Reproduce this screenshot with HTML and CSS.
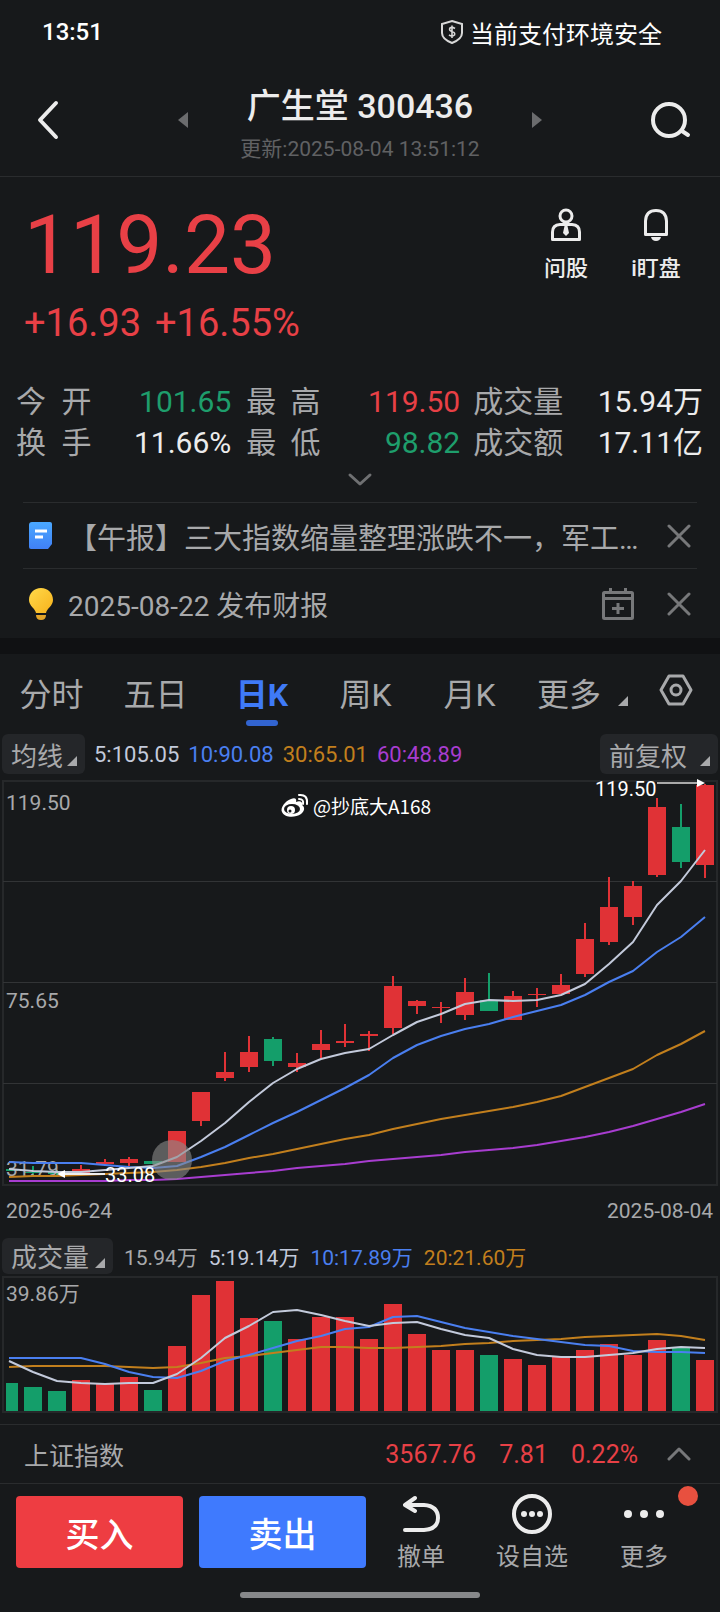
FILE: index.html
```html
<!DOCTYPE html>
<html lang="zh-CN">
<head>
<meta charset="utf-8">
<meta name="viewport" content="width=device-width, initial-scale=1">
<title>广生堂 300436</title>
<link rel="stylesheet" href="styles.css">
</head>
<body>

<div class="statusbar">
  <span class="clock">13:51</span>
  <span class="safe">
    <svg width="24" height="26" viewBox="0 0 24 26" fill="none" stroke="#d8d8d8" stroke-width="2">
      <path d="M12 2 L22 5 V14 Q22 20 12 24 Q2 20 2 14 V5 Z"/>
      <path d="M15 9.500 Q12 7.500 10 9 Q8.500 11.500 12 12.500 Q15.500 13.500 14.500 16 Q12 18 9 16 M12 6.500 V19" stroke-width="1.600"/>
    </svg>
    当前支付环境安全
  </span>
</div>

<header class="header">
  <button class="icon" aria-label="返回">
    <svg width="24" height="42" viewBox="0 0 24 42" fill="none" stroke="#ececec" stroke-width="4" stroke-linecap="round" stroke-linejoin="round"><path d="M20 4 L4 21 L20 38"/></svg>
  </button>
  <button class="icon" aria-label="上一只">
    <svg width="10" height="16" viewBox="0 0 10 16"><path d="M10 0 V16 L0 8 Z" fill="#6b6c6e"/></svg>
  </button>
  <div class="title">
    <h1>广生堂 300436</h1>
    <p>更新:2025-08-04 13:51:12</p>
  </div>
  <button class="icon" aria-label="下一只">
    <svg width="10" height="16" viewBox="0 0 10 16"><path d="M0 0 V16 L10 8 Z" fill="#6b6c6e"/></svg>
  </button>
  <button class="icon" aria-label="搜索">
    <svg width="42" height="38" viewBox="0 0 42 38" fill="none" stroke="#ececec" stroke-width="4" stroke-linecap="round"><circle cx="19" cy="19" r="16"/><path d="M32 30 L38 34"/></svg>
  </button>
</header>

<section class="quote">
  <div>
    <div class="price">119.23</div>
    <div class="change"><span>+16.93</span><span>+16.55%</span></div>
  </div>
  <div class="tools">
    <button>
      <svg width="32" height="34" viewBox="0 0 32 34" fill="none" stroke="#ececec" stroke-width="3"><circle cx="16" cy="8" r="6"/><path d="M10 16.500 H22 Q29.500 17 29.500 24 V31.500 H2.500 V24 Q2.500 17 10 16.500 Z" stroke-linejoin="round"/><path d="M14.500 18 H17.500 L19 25 L16 28 L13 25 Z" fill="#ececec" stroke="none"/></svg>
      问股
    </button>
    <button>
      <svg width="32" height="34" viewBox="0 0 32 34" fill="none" stroke="#ececec" stroke-width="3"><path d="M5.500 26.500 V13 Q6 2.500 16 2.500 Q26 2.500 26.500 13 V26.500 Z" stroke-linejoin="round"/><path d="M11 29 H21 Q20 33 16 33 Q12 33 11 29 Z" fill="#ececec" stroke="none"/></svg>
      i盯盘
    </button>
  </div>
</section>

<table class="stats">
  <tr>
    <th scope="row"><span><i>今</i><i>开</i></span></th><td class="green">101.65</td>
    <th scope="row"><span><i>最</i><i>高</i></span></th><td class="red">119.50</td>
    <th scope="row"><span>成交量</span></th><td>15.94万</td>
  </tr>
  <tr>
    <th scope="row"><span><i>换</i><i>手</i></span></th><td>11.66%</td>
    <th scope="row"><span><i>最</i><i>低</i></span></th><td class="green">98.82</td>
    <th scope="row"><span>成交额</span></th><td>17.11亿</td>
  </tr>
</table>
<button class="expand" aria-label="展开">
  <svg width="26" height="16" viewBox="0 0 26 16" fill="none" stroke="#6f7072" stroke-width="3" stroke-linecap="round" stroke-linejoin="round"><path d="M3 3 L13 12 L23 3"/></svg>
</button>

<ul class="notices">
  <li>
    <svg width="26" height="32" viewBox="0 0 26 32"><defs><linearGradient id="doc" x2="0" y2="1"><stop stop-color="#4aa8ff"/><stop offset="1" stop-color="#4080f5"/></linearGradient></defs><path d="M4 2 H22 Q24 2 24 4 V24 L20 29 H3 Q1 29 1 27 V5 Q1 2 4 2 Z" fill="url(#doc)"/><path d="M7 11 H19 M7 17 H15" stroke="#fff" stroke-width="3"/></svg>
    <a class="news" href="#">【午报】三大指数缩量整理涨跌不一，军工…</a>
    <button class="icon" aria-label="关闭"><svg width="24" height="24" viewBox="0 0 24 24" stroke="#77787a" stroke-width="3" stroke-linecap="round"><path d="M2 2 L22 22 M22 2 L2 22"/></svg></button>
  </li>
  <li>
    <svg width="26" height="32" viewBox="0 0 26 32"><defs><linearGradient id="bulb" x2="1" y2="1"><stop stop-color="#ffd94a"/><stop offset="1" stop-color="#f7b21c"/></linearGradient></defs><path d="M13 0 C20 0 25 5 25 12 C25 18 19 20 18 25 H8 C7 20 1 18 1 12 C1 5 6 0 13 0 Z" fill="url(#bulb)"/><path d="M8 27 H18 Q18 32 13 32 Q8 32 8 27 Z" fill="#e3a52a"/></svg>
    <a href="#">2025-08-22 发布财报</a>
    <button class="icon" aria-label="加入日历"><svg width="34" height="34" viewBox="0 0 34 34" fill="none" stroke="#77787a" stroke-width="3"><rect x="2.500" y="5.500" width="29" height="26" rx="1"/><path d="M3 11.500 H31 M9.500 1 V6 M24.500 1 V6 M17 16 V27 M11 21.500 H23"/></svg></button>
    <button class="icon" aria-label="关闭"><svg width="24" height="24" viewBox="0 0 24 24" stroke="#77787a" stroke-width="3" stroke-linecap="round"><path d="M2 2 L22 22 M22 2 L2 22"/></svg></button>
  </li>
</ul>

<nav class="tabs">
  <button>分时</button>
  <button>五日</button>
  <button class="on">日K</button>
  <button>周K</button>
  <button>月K</button>
  <button>更多</button>
  <div class="set">
    <svg width="10" height="10" viewBox="0 0 10 10"><path d="M10 0 V10 H0 Z" fill="#a8a9ab"/></svg>
    <button class="icon" aria-label="设置"><svg width="34" height="32" viewBox="0 0 34 32" fill="none" stroke="#a8a9ab" stroke-width="3" stroke-linejoin="round"><path d="M10 2 H24 L32 16 L24 30 H10 L2 16 Z"/><circle cx="17" cy="16" r="5"/></svg></button>
  </div>
</nav>

<div class="legend">
  <button class="pick">均线<svg width="10" height="10" viewBox="0 0 10 10"><path d="M10 0 V10 H0 Z" fill="#a8a9ab"/></svg></button>
  <span class="m5">5:105.05</span>
  <span class="m10">10:90.08</span>
  <span class="m30">30:65.01</span>
  <span class="m60">60:48.89</span>
  <button class="pick wide">前复权<svg width="10" height="10" viewBox="0 0 10 10"><path d="M10 0 V10 H0 Z" fill="#a8a9ab"/></svg></button>
</div>

<svg class="chart" id="kline" viewBox="0 780 720 406"></svg>

<div class="dates"><span>2025-06-24</span><span>2025-08-04</span></div>

<div class="legend vol">
  <button class="pick wide">成交量<svg width="10" height="10" viewBox="0 0 10 10"><path d="M10 0 V10 H0 Z" fill="#a8a9ab"/></svg></button>
  <span>15.94万</span>
  <span class="m5">5:19.14万</span>
  <span class="m10">10:17.89万</span>
  <span class="m30">20:21.60万</span>
</div>

<svg class="chart" id="volume" viewBox="0 1276 720 137"></svg>

<div class="index">
  <span class="name">上证指数</span>
  <span>3567.76</span><span>7.81</span><span>0.22%</span>
  <button class="icon" aria-label="展开指数"><svg width="24" height="16" viewBox="0 0 24 16" fill="none" stroke="#77787a" stroke-width="3" stroke-linecap="round" stroke-linejoin="round"><path d="M2 13 L12 3 L22 13"/></svg></button>
</div>

<footer class="actions">
  <button class="trade buy">买入</button>
  <button class="trade sell">卖出</button>
  <button class="act">
    <svg width="42" height="42" viewBox="0 0 42 42" fill="none" stroke="#ececec" stroke-width="4" stroke-linecap="round" stroke-linejoin="round"><path d="M15 5 L5 12 L15 18 M5 12 H24 Q38 13 38 25 Q38 36 24 37 H5"/></svg>
    撤单
  </button>
  <button class="act">
    <svg width="42" height="42" viewBox="0 0 42 42"><circle cx="21" cy="21" r="18" fill="none" stroke="#ececec" stroke-width="4"/><g fill="#ececec"><circle cx="13" cy="21" r="3"/><circle cx="21" cy="21" r="3"/><circle cx="29" cy="21" r="3"/></g></svg>
    设自选
  </button>
  <button class="act">
    <svg width="42" height="42" viewBox="0 0 42 42" fill="#ececec"><circle cx="5" cy="21" r="4"/><circle cx="21" cy="21" r="4"/><circle cx="37" cy="21" r="4"/></svg>
    更多
    <b class="dot"></b>
  </button>
</footer>
<div class="homebar"></div>

<script src="chart.js"></script>
</body>
</html>
```

FILE: styles.css
```css
* {
    box-sizing: border-box;
    }
body {
    margin: 0;
    background: #17191b;
    color: #a8a9ab;
    font-family: Roboto, "Noto Sans CJK SC", sans-serif;
    font-size: 22px;
    }
button {
    padding: 0;
    border: 0;
    background: none;
    color: inherit;
    font: inherit;
    }
a {
    color: inherit;
    text-decoration: none;
    }
svg {
    display: block;
    flex: none;
    }
.icon {
    flex: none;
    }

/* top */
.statusbar {
    display: flex;
    justify-content: space-between;
    align-items: center;
    height: 64px;
    padding: 0 58px 0 42px;
    color: #fff;
    font-size: 24px;
    }
.clock {
    font-weight: 500;
    }
.safe {
    display: flex;
    align-items: center;
    gap: 6px;
    }
.header {
    display: grid;
    grid-template-columns: 140px 30px 1fr 30px 140px;
    align-items: center;
    justify-items: center;
    height: 113px;
    padding: 0 28px;
    border-bottom: 1px solid #2a2c2e;
    }
.header .icon:first-child {
    justify-self: start;
    padding-left: 8px;
    }
.header .icon:last-child {
    justify-self: end;
    }
.title {
    padding-top: 9px;
    text-align: center;
    }
.title h1 {
    margin: 0;
    color: #ececec;
    font-size: 34px;
    line-height: 48px;
    font-weight: 500;
    }
.title p {
    margin: 0;
    color: #606163;
    font-size: 21px;
    line-height: 38px;
    }

/* price */
.quote {
    display: flex;
    justify-content: space-between;
    padding: 20px 37px 0 24px;
    color: #e84046;
    }
.price {
    font-size: 82px;
    line-height: 96px;
    }
.change {
    display: flex;
    gap: 14px;
    font-size: 38px;
    line-height: 60px;
    }
.tools {
    display: flex;
    gap: 36px;
    padding-top: 11px;
    }
.tools button {
    display: flex;
    flex-direction: column;
    align-items: center;
    align-self: flex-start;
    gap: 12px;
    min-width: 54px;
    color: #ececec;
    font-weight: 500;
    line-height: 30px;
    }
.stats {
    width: 100%;
    margin-top: 28px;
    padding: 0 17px 0 16px;
    border-spacing: 0;
    table-layout: fixed;
    font-size: 30px;
    line-height: 41px;
    }
.stats th {
    width: 11%;
    padding: 0;
    font-weight: 400;
    white-space: nowrap;
    }
.stats th:nth-child(3) {
    width: 13%;
    padding-left: 15px;
    }
.stats th:nth-child(5) {
    width: 15%;
    padding-left: 13px;
    }
.stats th span {
    display: flex;
    justify-content: space-between;
    }
.stats i {
    font-style: normal;
    }
.stats td {
    padding: 0;
    color: #ececec;
    text-align: right;
    white-space: nowrap;
    }
.stats .red {
    color: #e84046;
    }
.stats .green {
    color: #1e9e6c;
    }
.expand {
    display: block;
    margin: 0 auto;
    padding: 9px 10px 14px;
    }

/* news */
.notices {
    margin: 0;
    padding: 0 23px;
    border-bottom: 16px solid #101113;
    list-style: none;
    font-size: 28px;
    }
.notices li {
    display: flex;
    align-items: center;
    height: 66px;
    padding: 0 6px 0 5px;
    border-top: 1px solid #2a2c2e;
    }
.notices li:last-child {
    height: 70px;
    }
.notices a {
    flex: 1;
    min-width: 0;
    margin-left: 14px;
    white-space: nowrap;
    overflow: hidden;
    }
.notices .news {
    font-size: 29px;
    }
.notices .icon + .icon {
    margin-left: 32px;
    }

/* tabs */
.tabs {
    display: grid;
    grid-template-columns: 103fr 105fr 108fr 99fr 109fr 90fr 106fr;
    height: 76px;
    font-size: 32px;
    }
.tabs > button {
    position: relative;
    }
.tabs .on {
    color: #3f7af7;
    font-weight: 700;
    }
.tabs .on::after {
    content: "";
    position: absolute;
    left: 50%;
    bottom: 4px;
    width: 32px;
    height: 6px;
    margin-left: -16px;
    border-radius: 3px;
    background: #3264d0;
    }
.set {
    display: flex;
    align-items: center;
    justify-content: space-between;
    padding: 0 27px 4px 4px;
    }
.set > svg {
    margin-top: 22px;
    }

/* charts */
.legend {
    display: flex;
    align-items: center;
    gap: 9px;
    height: 50px;
    padding: 0 2px 2px;
    }
.pick {
    display: flex;
    align-items: center;
    justify-content: space-between;
    width: 83px;
    height: 40px;
    padding: 0 8px 0 9px;
    border-radius: 6px;
    background: #242629;
    font-size: 26px;
    }
.pick svg {
    margin-top: 14px;
    }
.legend .wide {
    width: 118px;
    margin-left: auto;
    }
.vol {
    gap: 11px;
    height: 39px;
    font-size: 21px;
    }
.vol .wide {
    width: 111px;
    height: 36px;
    margin-left: 0;
    }
.m5 {
    color: #c3cadb;
    }
.m10 {
    color: #4a7ff0;
    }
.m30 {
    color: #c27f1d;
    }
.m60 {
    color: #a83dd0;
    }
.chart {
    width: 100%;
    height: auto;
    overflow: visible;
    }
.chart text {
    fill: #a8a9ab;
    font-size: 21px;
    }
.chart .mark {
    fill: #fff;
    font-size: 20px;
    }
.chart .user {
    fill: #fff;
    font-family: "Noto Sans CJK SC", sans-serif;
    font-size: 19px;
    }
.chart .up {
    fill: #e03236;
    }
.chart .down {
    fill: #149e6a;
    }
.chart polyline {
    fill: none;
    stroke: currentColor;
    stroke-width: 2;
    stroke-linejoin: round;
    }
.frame {
    fill: none;
    stroke: #26282a;
    stroke-width: 2;
    }
.grid {
    stroke: #323436;
    }
.dates {
    display: flex;
    justify-content: space-between;
    padding: 0 7px 0 6px;
    font-size: 21px;
    line-height: 51px;
    }

/* bottom */
.index {
    display: flex;
    align-items: center;
    gap: 23px;
    height: 60px;
    margin-top: 11px;
    padding: 0 29px 0 24px;
    border: solid #2a2c2e;
    border-width: 1px 0;
    color: #e84046;
    font-size: 25px;
    }
.index .name {
    margin-right: auto;
    color: #a8a9ab;
    }
.index .icon {
    margin-left: 6px;
    }
.actions {
    display: flex;
    padding: 12px 36px 0 16px;
    }
.trade {
    flex: 1;
    height: 72px;
    margin-right: 16px;
    border-radius: 4px;
    color: #fff;
    font-size: 34px;
    font-weight: 500;
    }
.buy {
    background: #ee3d42;
    }
.sell {
    background: #3f7afe;
    }
.act {
    position: relative;
    display: flex;
    flex-direction: column;
    align-items: center;
    gap: 4px;
    width: 78px;
    margin-top: -3px;
    font-size: 24px;
    line-height: 36px;
    }
.act:nth-child(4) {
    width: 144px;
    }
.act:nth-child(5) {
    width: 80px;
    }
.dot {
    position: absolute;
    top: -7px;
    right: -14px;
    width: 20px;
    height: 20px;
    border-radius: 50%;
    background: #e8503f;
    }
.homebar {
    width: 240px;
    height: 6px;
    margin: 17px auto 14px;
    border-radius: 3px;
    background: #87888a;
    }
```

FILE: chart.js
```js
// one row per day: body top, body bottom, wick top, wick bottom, falling day
var days = [
  [1169,1171,1169,1171,1], [1172,1173,1166,1175,1], [1172,1174,1170,1175,1],
  [1169,1175,1165,1175,0], [1162,1164,1159,1164,0], [1159,1163,1157,1166,0],
  [1161,1164,1161,1164,1], [1131,1162,1131,1162,0], [1092,1121,1092,1126,0],
  [1072,1078,1052,1081,0], [1052,1067,1036,1072,0], [1039,1061,1037,1066,1],
  [1063,1067,1053,1072,0], [1044,1050,1030,1058,0], [1041,1043,1024,1047,0],
  [1034,1036,1031,1051,0], [986,1028,976,1034,0],   [1001,1006,1000,1014,0],
  [1007,1008,1002,1023,0], [992,1015,978,1020,0],   [1000,1011,973,1011,1],
  [996,1020,991,1020,0],   [994,995,988,1007,0],    [985,994,974,994,0],
  [939,974,923,977,0],     [907,942,877,945,0],     [886,917,881,925,0],
  [807,875,798,877,0],     [827,862,804,868,1],     [785,865,784,878,0]
];
var volumes = [1383,1387,1391,1380,1383,1377,1390,1346,1295,1281,1318,1321,1339,1317,1317,
  1339,1304,1334,1350,1350,1355,1359,1365,1357,1350,1344,1355,1340,1347,1360];

var ma5 = [1169,1171,1172,1172,1170,1168,1166,1157,1141,1123,1102,1083,1069,1059,1053,
  1049,1035,1022,1014,1004,1000,1001,1000,995,984,964,942,905,881,850];
var ma10 = [1162,1163,1163,1163,1165,1167,1168,1166,1157,1147,1135,1123,1112,1100,1088,
  1075,1058,1045,1036,1029,1024,1017,1011,1005,995,982,971,952,937,917];
var ma30 = [1177,1176,1176,1175,1174,1173,1172,1170,1167,1163,1158,1154,1149,1144,1139,
  1135,1129,1124,1119,1115,1111,1107,1102,1096,1087,1078,1069,1055,1044,1031];
var ma60 = [1181,1181,1181,1181,1181,1180,1180,1179,1177,1175,1173,1171,1168,1166,1164,
  1161,1159,1157,1155,1152,1150,1148,1145,1141,1137,1132,1126,1119,1112,1104];
var v5 = [1361,1372,1381,1383,1384,1383,1383,1374,1358,1338,1326,1312,1310,1315,1321,
  1326,1323,1322,1329,1335,1338,1349,1355,1357,1357,1355,1353,1349,1347,1348];
var v10 = [1358,1358,1358,1358,1364,1372,1377,1378,1371,1361,1355,1348,1341,1336,1329,
  1327,1317,1316,1322,1328,1332,1336,1339,1342,1345,1346,1351,1352,1352,1353];
var v20 = [1367,1366,1366,1366,1366,1367,1368,1367,1363,1358,1356,1353,1350,1347,1347,
  1348,1348,1347,1346,1344,1343,1341,1340,1339,1337,1336,1335,1334,1336,1340];

function rect(x, y, w, h, cls) {
  return '<rect x="' + x + '" y="' + y + '" width="' + w + '" height="' + h + '" class="' + cls + '"/>';
}
function line(values, cls) {
  var pts = values.map(function (y, i) { return (9 + 24 * i) + ',' + y; });
  return '<polyline class="' + cls + '" points="' + pts.join(' ') + '"/>';
}
function grid(y) {
  return '<path class="grid" d="M3 ' + y + ' H717"/>';
}
function text(x, y, cls, s) {
  return '<text x="' + x + '" y="' + y + '" class="' + cls + '">' + s + '</text>';
}

var k = rect(3, 781, 714, 404, 'frame') + grid(881.5) + grid(982.5) + grid(1083.5);
var v = rect(3, 1277, 714, 135, 'frame');
days.forEach(function (d, i) {
  var cls = d[4] ? 'down' : 'up';
  var x = i ? 24 * i : 6;
  var w = i ? 18 : 12;
  k += rect(24 * i + 8, d[2], 2, d[3] - d[2], cls) + rect(x, d[0], w, d[1] - d[0], cls);
  v += rect(x, volumes[i], w, 1411 - volumes[i], cls);
});

k += text(6, 810, '', '119.50') + text(6, 1008, '', '75.65') + text(6, 1176, '', '31.79');
k += line(ma60, 'm60') + line(ma30, 'm30') + line(ma10, 'm10') + line(ma5, 'm5');
// touch point
k += '<circle cx="172" cy="1160" r="20" fill="#8a8a8a" fill-opacity=".6"/>';
// high and low marks
k += '<path d="M657 783 H698" stroke="#aaa" stroke-width="2"/><path d="M697 779 L705 783 L697 787 Z" fill="#fff"/>';
k += '<path d="M64 1174 H105" stroke="#eee" stroke-width="2"/><path d="M65 1170 L57 1174 L65 1178 Z" fill="#fff"/>';
k += text(595, 796, 'mark', '119.50') + text(105, 1182, 'mark', '33.08');
// weibo watermark
k += '<g fill="#fff"><path d="M291 799 C295 797 297 799 296 802 C300 800 303 802 302 805 C305 807 305 811 301 814 C295 818 285 818 282 812 C280 808 285 801 291 799 Z"/>' +
  '<ellipse cx="292" cy="809" rx="8" ry="5" fill="#17191b"/><circle cx="291" cy="810" r="4"/><circle cx="290" cy="811" r="1.500" fill="#17191b"/></g>' +
  '<path d="M299 795 Q308 794 307 804 M299 799 Q304 799 303 804" fill="none" stroke="#fff" stroke-width="2" stroke-linecap="round"/>';
k += text(313, 814, 'user', '@抄底大A168');

v += text(6, 1301, '', '39.86万') + line(v20, 'm30') + line(v10, 'm10') + line(v5, 'm5');

document.getElementById('kline').innerHTML = k;
document.getElementById('volume').innerHTML = v;
```
